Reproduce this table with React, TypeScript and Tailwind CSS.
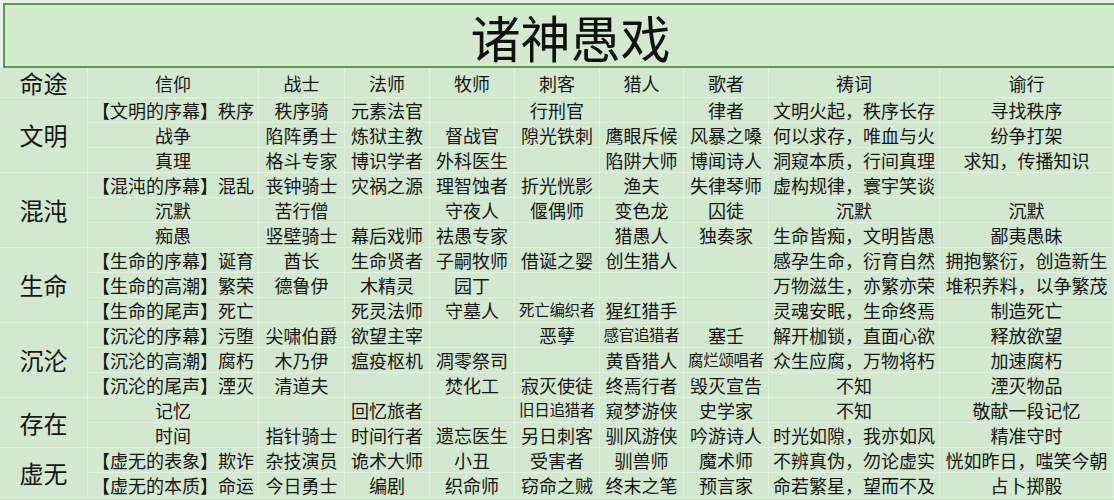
import React from "react";

type Group = { name: string; rows: string[][] };

const groups: Group[] = [
  {
    name: "文明",
    rows: [
      ["【文明的序幕】秩序", "秩序骑", "元素法官", "", "行刑官", "", "律者", "文明火起，秩序长存", "寻找秩序"],
      ["战争", "陷阵勇士", "炼狱主教", "督战官", "隙光铁刺", "鹰眼斥候", "风暴之嗓", "何以求存，唯血与火", "纷争打架"],
      ["真理", "格斗专家", "博识学者", "外科医生", "", "陷阱大师", "博闻诗人", "洞窥本质，行间真理", "求知，传播知识"],
    ],
  },
  {
    name: "混沌",
    rows: [
      ["【混沌的序幕】混乱", "丧钟骑士", "灾祸之源", "理智蚀者", "折光恍影", "渔夫", "失律琴师", "虚构规律，寰宇笑谈", ""],
      ["沉默", "苦行僧", "", "守夜人", "偃偶师", "变色龙", "囚徒", "沉默", "沉默"],
      ["痴愚", "竖壁骑士", "幕后戏师", "祛愚专家", "", "猎愚人", "独奏家", "生命皆痴，文明皆愚", "鄙夷愚昧"],
    ],
  },
  {
    name: "生命",
    rows: [
      ["【生命的序幕】诞育", "酋长", "生命贤者", "子嗣牧师", "借诞之婴", "创生猎人", "", "感孕生命，衍育自然", "拥抱繁衍，创造新生"],
      ["【生命的高潮】繁荣", "德鲁伊", "木精灵", "园丁", "", "", "", "万物滋生，亦繁亦荣", "堆积养料，以争繁茂"],
      ["【生命的尾声】死亡", "", "死灵法师", "守墓人", "死亡编织者", "猩红猎手", "", "灵魂安眠，生命终焉", "制造死亡"],
    ],
  },
  {
    name: "沉沦",
    rows: [
      ["【沉沦的序幕】污堕", "尖啸伯爵", "欲望主宰", "", "恶孽", "感官追猎者", "塞壬", "解开枷锁，直面心欲", "释放欲望"],
      ["【沉沦的高潮】腐朽", "木乃伊", "瘟疫枢机", "凋零祭司", "", "黄昏猎人", "腐烂颂唱者", "众生应腐，万物将朽", "加速腐朽"],
      ["【沉沦的尾声】湮灭", "清道夫", "", "焚化工", "寂灭使徒", "终焉行者", "毁灭宣告", "不知", "湮灭物品"],
    ],
  },
  {
    name: "存在",
    rows: [
      ["记忆", "", "回忆旅者", "", "旧日追猎者", "窥梦游侠", "史学家", "不知", "敬献一段记忆"],
      ["时间", "指针骑士", "时间行者", "遗忘医生", "另日刺客", "驯风游侠", "吟游诗人", "时光如隙，我亦如风", "精准守时"],
    ],
  },
  {
    name: "虚无",
    rows: [
      ["【虚无的表象】欺诈", "杂技演员", "诡术大师", "小丑", "受害者", "驯兽师", "魔术师", "不辨真伪，勿论虚实", "恍如昨日，嗤笑今朝"],
      ["【虚无的本质】命运", "今日勇士", "编剧", "织命师", "窃命之贼", "终末之笔", "预言家", "命若繁星，望而不及", "占卜掷骰"],
    ],
  },
];

const headers = ["信仰", "战士", "法师", "牧师", "刺客", "猎人", "歌者", "祷词", "谕行"];

const cellBase =
  "flex items-center justify-center whitespace-nowrap border-r border-b border-[#e3f0e1] text-[#161616] leading-none";

function Cell({ text, col }: { text: string; col: number }) {
  const narrow = col >= 1 && col <= 6;
  const small = narrow && text.length >= 5;
  return (
    <div className={cellBase + (small ? " text-[15.5px] tracking-[-0.3px]" : " text-[18px]")}>
      {text}
    </div>
  );
}

export default function App() {
  return (
    <div
      className="w-[1114px] h-[500px] bg-[#d2e9cf] overflow-hidden"
      style={{ fontFamily: '"Noto Sans CJK SC", "Noto Sans", sans-serif' }}
    >
      <div className="h-[68px] pt-[3px] pl-[3px] bg-[#e6f2e4]">
        <div className="h-[65px] border-2 border-r-0 border-[#5f9a4c] bg-[#d3eacf] flex items-center justify-center pl-[22px]">
          <span className="text-[50px] leading-none text-[#111]">诸神愚戏</span>
        </div>
      </div>
      <div className="grid grid-cols-[88px_171px_86px_85px_85px_85px_84px_85px_171px_174px] grid-rows-[30px_repeat(16,25px)]">
        <div className={cellBase + " text-[24px]"}>命途</div>
        {headers.map((h) => (
          <div key={h} className={cellBase + " text-[18px]"}>
            {h}
          </div>
        ))}
        {groups.map((g) => (
          <React.Fragment key={g.name}>
            <div
              className={
                cellBase +
                " text-[24px] " +
                (g.rows.length === 3 ? "row-span-3" : "row-span-2")
              }
            >
              {g.name}
            </div>
            {g.rows.map((r, ri) => (
              <React.Fragment key={ri}>
                {r.map((c, ci) => (
                  <Cell key={ci} text={c} col={ci} />
                ))}
              </React.Fragment>
            ))}
          </React.Fragment>
        ))}
      </div>
    </div>
  );
}
